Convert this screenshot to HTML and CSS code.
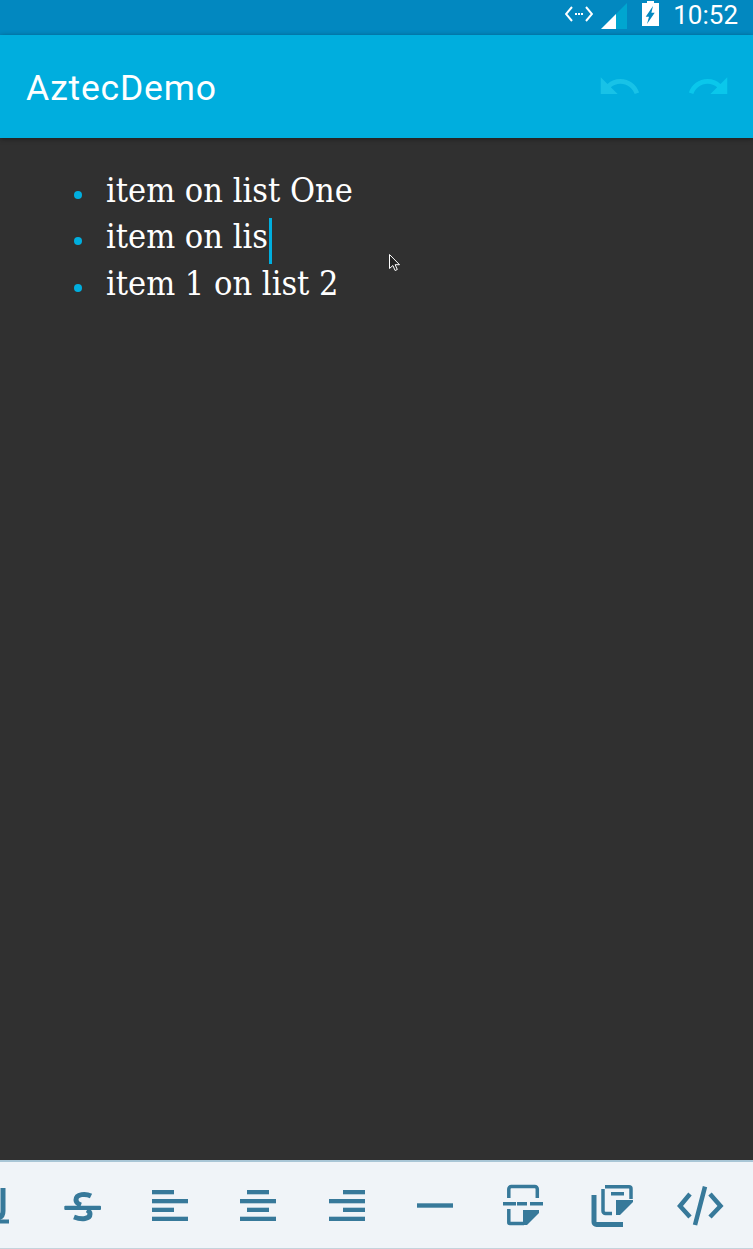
FILE: index.html
```html
<!DOCTYPE html>
<html>
<head>
    <meta charset="utf-8">
    <link rel="stylesheet" href="styles.css">
</head>
<body>
    <div class="status-bar">
        <svg class="status-code" viewBox="0 0 28 16"><path d="M7 1 1 8l6 7M21 1l6 7-6 7" fill="none" stroke="#fff" stroke-width="2"/><path d="M10 7h2v2h-2zM13 7h2v2h-2zM16 7h2v2h-2z" fill="#fff"/></svg>
        <svg class="status-signal" viewBox="0 0 26 26"><path d="M0 26 26 0v26z" fill="#00a6d0"/><path d="M0 26 15 11v15z" fill="#fff"/></svg>
        <svg class="status-battery" viewBox="0 0 17 25"><path d="M5 0h7v2h5v23H0V2h5z" fill="#fff"/><path d="M11 5 3.700 15.700H7L5 23l7.700-11.300H9.400z" fill="#0288c0"/></svg>
        <div class="status-time">10:52</div>
    </div>

    <div class="app-bar">
        <h1>AztecDemo</h1>
        <div class="app-actions">
            <div class="action undo">
                <svg viewBox="0 0 24 24"><path d="M12.5 8c-2.65 0-5.05.99-6.9 2.6L2 7v9h9l-3.62-3.62c1.39-1.16 3.16-1.88 5.12-1.88 3.54 0 6.55 2.31 7.6 5.5l2.37-.78C21.08 11.03 17.15 8 12.5 8z"/></svg>
            </div>
            <div class="action redo">
                <svg viewBox="0 0 24 24"><path d="M18.4 10.6C16.55 8.99 14.15 8 11.5 8c-4.65 0-8.58 3.03-9.96 7.22L3.9 16c1.05-3.19 4.05-5.5 7.6-5.5 1.95 0 3.73.72 5.12 1.88L13 16h9V7l-3.6 3.6z"/></svg>
            </div>
        </div>
    </div>

    <div class="editor">
        <ul class="editor-list">
            <li>item on list One</li>
            <li>item on lis<span class="caret"></span></li>
            <li>item 1 on list 2</li>
        </ul>
        <svg class="pointer" viewBox="0 0 12 18"><path d="M.5.5v14l3.4-3 2.2 5 2.2-1-2.2-4.8h4.4z" fill="#222" stroke="#fff"/></svg>
    </div>

    <div class="toolbar">
        <div class="tool">
            <svg viewBox="0 0 48 48"><path d="M34 7v23c0 5-3 7-7 7" class="line"/><rect x="20" y="38.500" width="20" height="4"/></svg>
        </div>
        <div class="tool">
            <svg viewBox="0 0 48 48"><path d="M33 15c-5-2.500-15-2.500-15 4 0 3 2 4 5 5M29 29c2 1 3 2 3 4 0 5-8 6-16 3" class="line"/><rect x="6.300" y="24.700" width="36.700" height="4.300" rx="1"/></svg>
        </div>
        <div class="tool">
            <svg viewBox="0 0 48 48"><rect x="6" y="9" width="22" height="4.300"/><rect x="6" y="18" width="36" height="4.300"/><rect x="6" y="26.700" width="22" height="4.300"/><rect x="6" y="35.700" width="36" height="4.300"/></svg>
        </div>
        <div class="tool">
            <svg viewBox="0 0 48 48"><rect x="13" y="9" width="22" height="4.300"/><rect x="6" y="18" width="36" height="4.300"/><rect x="13" y="26.700" width="22" height="4.300"/><rect x="6" y="35.700" width="36" height="4.300"/></svg>
        </div>
        <div class="tool">
            <svg viewBox="0 0 48 48"><rect x="20" y="9" width="22" height="4.300"/><rect x="6" y="18" width="36" height="4.300"/><rect x="20" y="26.700" width="22" height="4.300"/><rect x="6" y="35.700" width="36" height="4.300"/></svg>
        </div>
        <div class="tool">
            <svg viewBox="0 0 48 48"><rect x="6" y="22.300" width="36" height="4.400"/></svg>
        </div>
        <div class="tool">
            <svg viewBox="0 0 48 48"><path d="M9.800 17V8a2.500 2.500 0 0 1 2.500-2.500h23.500A2.500 2.500 0 0 1 38.300 8v9M9.800 28v13.500a1 1 0 0 0 1 1H25" class="thin"/><rect x="4" y="21" width="13" height="3.500"/><rect x="18" y="21" width="10" height="3.500"/><rect x="31" y="21" width="13" height="3.500"/><path d="M24 29h16v3L28 44h-4z"/></svg>
        </div>
        <div class="tool">
            <svg viewBox="0 0 48 48"><path d="M17 5.800h24a2 2 0 0 1 2 2V18M15 8v22a2.500 2.500 0 0 0 2.500 2.500H24" class="thin"/><path d="M28 19h17v2L32 34h-4z"/><rect x="23" y="11" width="13" height="3.500"/><path d="M6 14v27a2.500 2.500 0 0 0 2.500 2.500H35" class="line"/></svg>
        </div>
        <div class="tool">
            <svg viewBox="0 0 48 48"><path d="M14 13 4 25l10 11M34 13l10.500 12L34 36M29 5.600 19 44" class="code"/></svg>
        </div>
    </div>
</body>
</html>
```

FILE: styles.css
```css
html, body {
    height: 100%;
}

body {
    margin: 0;
    display: flex;
    flex-direction: column;
    overflow: hidden;
    font-family: Roboto, sans-serif;
    background: #303030;
    color: white;
}

.status-bar {
    height: 35px;
    flex-shrink: 0;
    display: flex;
    align-items: center;
    justify-content: flex-end;
    padding-right: 15px;
    background: #0288c0;
}

.status-code {
    width: 28px;
    height: 16px;
    margin-right: 8px;
    margin-bottom: 8px;
}

.status-signal {
    width: 26px;
    height: 26px;
    margin-right: 15px;
    margin-bottom: 3px;
}

.status-battery {
    width: 17px;
    height: 25px;
    margin-right: 14px;
    margin-bottom: 9px;
}

.status-time {
    font-size: 26px;
    margin-bottom: 6px;
}

.app-bar {
    height: 103px;
    flex-shrink: 0;
    display: flex;
    align-items: center;
    justify-content: space-between;
    padding-left: 26px;
    background: #00aede;
    box-shadow: 0 1px 5px rgba(0,0,0,0.4);
    position: relative;
}

.app-bar h1 {
    margin: 3px 0 0;
    font-size: 35.500px;
    font-weight: 450;
    letter-spacing: 0.800px;
}

.app-actions {
    display: flex;
}

.action {
    width: 89px;
    display: flex;
    justify-content: center;
}

.action svg {
    width: 45px;
    height: 45px;
}

.undo svg { fill: #18c2e7; }
.redo svg { fill: #0ac7eb; }

.editor {
    flex: 1;
    position: relative;
}

.editor-list {
    list-style: none;
    margin: 0;
    padding: 29px 0 0 106px;
    font-family: "DejaVu Serif Condensed", "DejaVu Serif", serif;
    font-size: 34px;
    line-height: 46.300px;
}

.editor-list li {
    position: relative;
}

.editor-list li::before {
    content: "";
    position: absolute;
    left: -32px;
    top: 24px;
    width: 8px;
    height: 8px;
    border-radius: 50%;
    background: #00aede;
}

.caret {
    display: inline-block;
    width: 3px;
    height: 46px;
    margin: 5px 0 -5px 1px;
    vertical-align: top;
    background: #00aede;
}

.pointer {
    position: absolute;
    left: 389px;
    top: 116px;
    width: 12px;
    height: 18px;
}

.toolbar {
    height: 89px;
    flex-shrink: 0;
    box-sizing: border-box;
    display: flex;
    align-items: center;
    justify-content: flex-end;
    overflow: hidden;
    padding-right: 9px;
    border-top: 2px solid #a9c6d6;
    border-bottom: 1px solid #c5d3dc;
    background: #f0f4f8;
}

.tool {
    width: 88.300px;
    flex-shrink: 0;
    display: flex;
    justify-content: center;
}

.tool svg {
    width: 48px;
    height: 48px;
    fill: #37799a;
}

.tool .line,
.tool .thin,
.tool .code {
    fill: none;
    stroke: #37799a;
}

.tool .line { stroke-width: 5; }
.tool .thin { stroke-width: 3.500; }
.tool .code { stroke-width: 4.500; }
```
